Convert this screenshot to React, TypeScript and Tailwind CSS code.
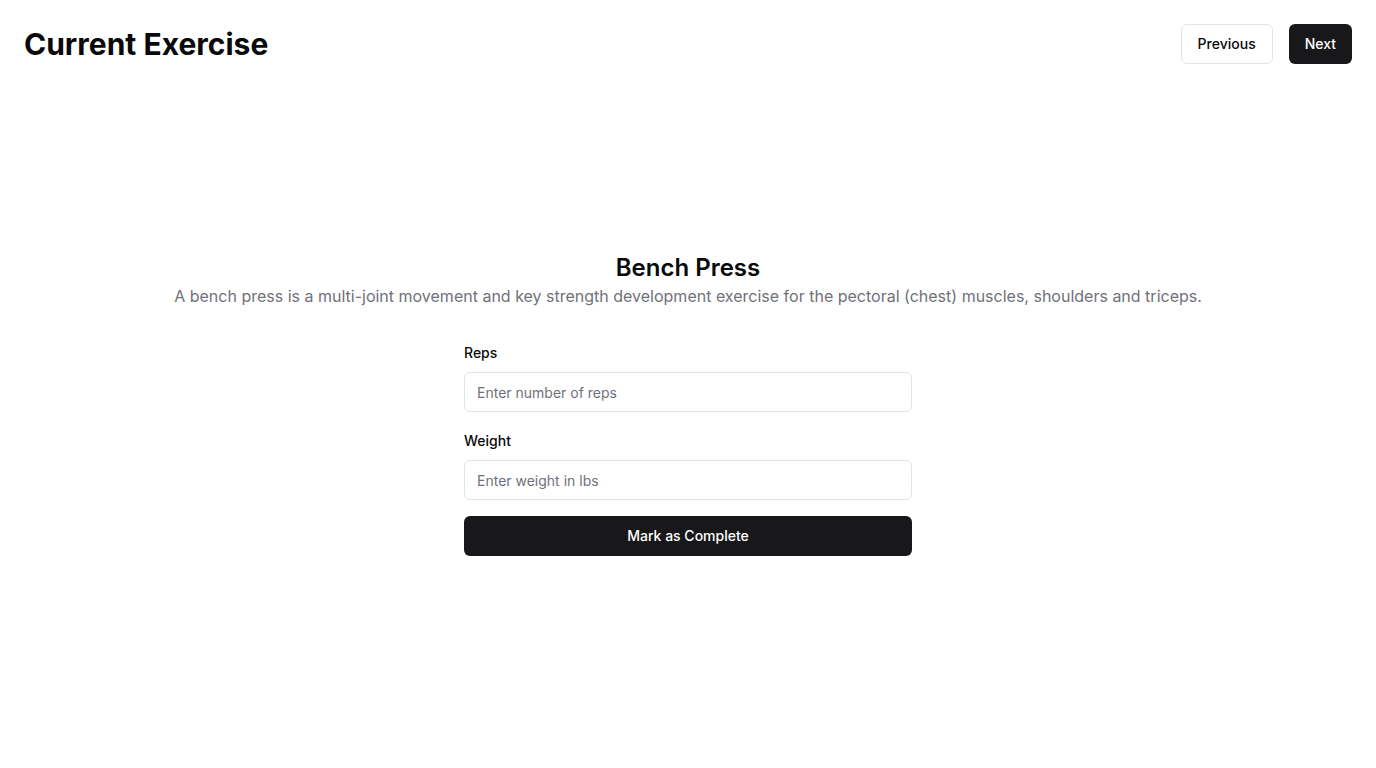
import { useState } from 'react';

export default function App() {
  const [reps, setReps] = useState('');
  const [weight, setWeight] = useState('');

  return (
    <div
      className="min-h-screen bg-white text-[#09090b]"
      style={{ fontFamily: 'Inter, "Noto Sans", sans-serif' }}
    >
      {/* Top bar */}
      <header className="flex items-center justify-between p-6">
        <h1 className="text-3xl font-bold">Current Exercise</h1>
        <div className="flex gap-4">
          <button className="h-10 px-4 rounded-md border border-[#e4e4e7] bg-white text-sm font-medium">
            Previous
          </button>
          <button className="h-10 px-4 rounded-md bg-[#18181b] text-white text-sm font-medium">
            Next
          </button>
        </div>
      </header>

      <main className="flex flex-col items-center pt-[164px]">
        <h2 className="text-2xl font-semibold leading-8">Bench Press</h2>
        <p className="text-base leading-6 text-[#71717a]">
          A bench press is a multi-joint movement and key strength development exercise for the pectoral
          (chest) muscles, shoulders and triceps.
        </p>

        <form
          className="mt-8 w-full max-w-md flex flex-col gap-4"
          onSubmit={(e) => e.preventDefault()}
        >
          <div>
            <label className="block pt-px mb-[7px] text-sm font-medium leading-6">Reps</label>
            <input
              type="number"
              value={reps}
              onChange={(e) => setReps(e.target.value)}
              placeholder="Enter number of reps"
              className="w-full h-10 px-3 rounded-md border border-[#e4e4e7] text-sm placeholder:text-[#71717a] outline-none"
            />
          </div>
          <div>
            <label className="block pt-px mb-[7px] text-sm font-medium leading-6">Weight</label>
            <input
              type="number"
              value={weight}
              onChange={(e) => setWeight(e.target.value)}
              placeholder="Enter weight in lbs"
              className="w-full h-10 px-3 rounded-md border border-[#e4e4e7] text-sm placeholder:text-[#71717a] outline-none"
            />
          </div>
          <button
            type="submit"
            className="h-10 w-full rounded-md bg-[#18181b] text-white text-sm font-medium"
          >
            Mark as Complete
          </button>
        </form>
      </main>
    </div>
  );
}
